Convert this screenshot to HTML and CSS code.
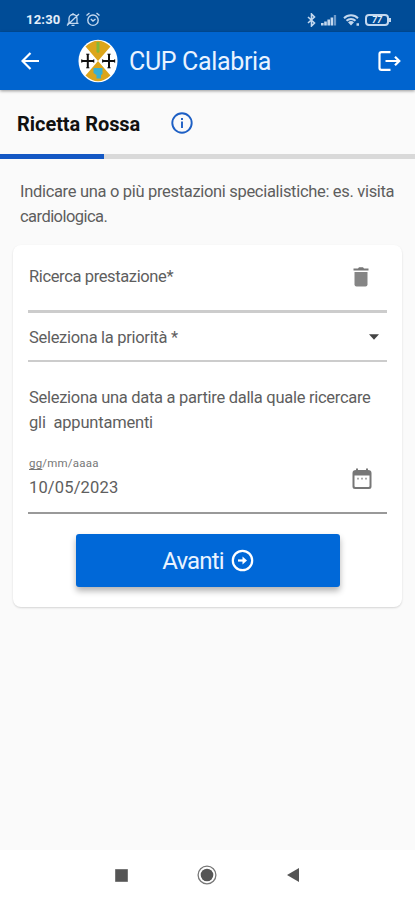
FILE: index.html
```html
<!DOCTYPE html>
<html lang="it">
<head>
<meta charset="utf-8">
<title>CUP Calabria</title>
<link rel="stylesheet" href="styles.css">
</head>
<body>
<div class="screen">
  <div class="status">
    <span class="clock">12:30</span>
    <svg class="ic-bell" width="14" height="15" viewBox="0 0 14 15" fill="none" stroke="#c3d8ef" stroke-width="1.3"><path d="M3 11V6.500a4 4 0 0 1 8 0V11M1.500 11.300h11M5.500 13.300h3M7 1v1.500M1 13.500L13 2"/></svg>
    <svg class="ic-alarm" width="14" height="15" viewBox="0 0 14 15" fill="none" stroke="#c3d8ef" stroke-width="1.400"><circle cx="7" cy="8.200" r="5.200"/><path d="M.5 3.500L3.500 1M13.500 3.500L10.500 1M4.800 7l2.200 2 2.500-2"/></svg>
    <span class="grow"></span>
    <svg class="ic-bt" width="9" height="14" viewBox="0 0 9 14" fill="none" stroke="#c3d8ef" stroke-width="1.600"><path d="M1 4l6.500 6L4.500 13V1l3 3L1 10"/></svg>
    <svg class="ic-sig" width="16" height="12" viewBox="0 0 16 12"><path fill="#c3d8ef" d="M0 9h2.600v2.500H0zM3.200 7.500h2.600v4H3.200zM6.400 5.500H9v6H6.400zM9.600 3.500h2.600v8H9.600z"/><path fill="#6e9ac9" d="M12.800 1h2.300v10.500h-2.300z"/></svg>
    <svg class="ic-wifi" width="17" height="14" viewBox="0 0 17 14" fill="none" stroke="#c3d8ef" stroke-width="2"><path d="M1 5.200a10 10 0 0 1 14 0M3.500 7.800a6.500 6.500 0 0 1 9 0"/><path fill="#c3d8ef" stroke="none" d="M8 12.500L5 9.300a4.500 4.500 0 0 1 6 0z"/><path d="M13.500 11.500h2.500" stroke-width="2.500"/></svg>
    <span class="battery"><span>77</span></span>
  </div>
  <header class="bar">
    <svg class="back" width="18" height="18" viewBox="0 0 18 18" fill="none" stroke="#fff" stroke-width="2.200"><path d="M18 9H2M9.500 1L1.500 9l8 8"/></svg>
    <svg class="logo" width="40" height="44" viewBox="0 0 40 44">
      <ellipse cx="20" cy="22" rx="19.500" ry="21.300" fill="#fff"/>
      <path fill="#dca51b" d="M20 22L7.500 7.500Q20-4 32.500 7.500zM20 22L7.500 36.500Q20 48 32.500 36.500z"/>
      <path fill="#83b83a" d="M18.500 3h3v10l-1.500 1-1.500-1z"/>
      <path fill="#39b0d2" d="M15.500 29h9v6l-1.500 1v3.500h-4.500V36l-3-2z"/>
      <path stroke="#111" stroke-width="2" fill="none" d="M3.500 22h12.500M9.800 15v14M24.500 22H37M31 15v14"/>
      <path stroke="#111" stroke-width="1" fill="none" d="M3.800 20.300v3.400M15.800 20.300v3.400M24.700 20.300v3.400M36.700 20.300v3.400M8.200 15.200h3.200M8.200 28.800h3.200M29.400 15.200h3.200M29.400 28.800h3.200"/>
    </svg>
    <h1>CUP Calabria</h1>
    <svg class="exit" width="23" height="20" viewBox="0 0 23 20" fill="none" stroke="#fff" stroke-width="2.200"><path d="M12.500 1.200H3.500Q1.500 1.200 1.500 3v14q0 1.800 2 1.800h9M7.500 10H21M17 5.700L21.300 10 17 14.300"/></svg>
  </header>
  <div class="tab">
    <h2>Ricetta Rossa</h2>
    <svg width="22" height="22" viewBox="0 0 22 22" fill="none" stroke="#1d5fc4" stroke-width="1.900"><circle cx="11" cy="11" r="9.700"/><path d="M11 9.500v6.500M11 6v2"/></svg>
  </div>
  <div class="progress"><div></div></div>
  <p class="intro"><span class="i1">Indicare una o più prestazioni specialistiche: es. visita</span><br><span class="i2">cardiologica.</span></p>
  <main class="card">
    <div class="field f1">
      <span class="t1">Ricerca prestazione*</span>
      <svg class="trash" width="16" height="20" viewBox="0 0 16 20"><path fill="#777" d="M5 1.500L6 .3h4l1 1.200h4.500v2H.5v-2z"/><path fill="#858585" d="M1.500 5h13v12.500q0 2-2 2h-9q-2 0-2-2z"/></svg>
    </div>
    <div class="field f2">
      <span class="t2">Seleziona la priorità *</span>
      <svg class="caret" width="10" height="6" viewBox="0 0 10 6"><path fill="#444" d="M0 .3h10L5 5.800z"/></svg>
    </div>
    <p class="when"><span class="t3">Seleziona una data a partire dalla quale ricercare</span><br><span class="t4">gli&nbsp; appuntamenti</span></p>
    <div class="field f3">
      <div class="date"><small><u>gg</u>/mm/aaaa</small><span>10/05/2023</span></div>
      <svg class="cal" width="20" height="22" viewBox="0 0 20 22"><path fill="#777" d="M4 .5h2V2h8V.5h2V2q3.500 0 3.500 3v13.500q0 2.500-2.500 2.500H3Q.5 21 .5 18.500V5Q.5 2 4 2z"/><path fill="#fff" d="M2.500 7.500h15v10.500q0 1-1 1h-13q-1 0-1-1z"/><path stroke="#aaa" stroke-width="1.800" d="M5 10.700h2M9 10.700h2M13 10.700h2"/></svg>
    </div>
    <button class="next"><span>Avanti</span>
      <svg width="23" height="23" viewBox="0 0 23 23" fill="none" stroke="#fff" stroke-width="2.200"><circle cx="11.500" cy="11.500" r="9.700"/><path d="M7 11.500h6"/><path fill="#fff" stroke="none" d="M11.500 7.500l4.500 4-4.500 4z"/></svg>
    </button>
  </main>
  <div class="grow"></div>
  <nav class="nav">
    <svg width="13" height="13" viewBox="0 0 13 13"><path fill="#555" stroke="#777" d="M.5.5h12v12H.5z"/></svg>
    <svg width="20" height="20" viewBox="0 0 20 20"><circle cx="10" cy="10" r="8.900" fill="none" stroke="#777" stroke-width="1.300"/><circle cx="10" cy="10" r="6.300" fill="#555"/></svg>
    <svg width="12" height="14" viewBox="0 0 12 14"><path fill="#555" d="M12 0v14L0 7z"/></svg>
  </nav>
</div>
</body>
</html>
```
FILE: styles.css
```css
* { box-sizing: border-box; }
body { margin: 0; font-family: Roboto, "Liberation Sans", sans-serif; color: #5e5e5e; background: #fafafa; }
h1, h2, p { margin: 0; font-weight: 400; }
svg { display: block; flex: none; }
span, h1, h2, small { white-space: nowrap; }
.screen { display: flex; flex-direction: column; width: 415px; height: 900px; overflow: hidden; }
.grow { flex: 1; }
.status { display: flex; align-items: center; height: 32px; padding: 7px 24px 0 26px; background: #004c97; }
.clock { width: 35px; margin-right: 5px; color: #e4eefa; font-size: 13px; font-weight: 700; letter-spacing: 0.2px; }
.ic-alarm { margin-left: 6px; }
.ic-sig { margin-left: 5px; }
.ic-wifi { margin-left: 6px; }
.battery { position: relative; display: flex; align-items: center; justify-content: center; width: 24px; height: 12px; margin: 0 2px 0 5px; border: 2px solid #c3d8ef; border-radius: 4px; color: #e4eefa; font-size: 9px; font-weight: 700; font-style: italic; line-height: 8px; }
.battery::after { content: ""; position: absolute; right: -4px; top: 2px; width: 2px; height: 4px; background: #c3d8ef; }
.bar { display: flex; align-items: center; height: 58px; padding: 0 14px 0 21px; background: #0064cf; box-shadow: 0 1px 3px rgba(0,0,0,.4); }
.logo { margin-left: 39px; }
.bar h1 { flex: 1; margin: 1px 0 0 11px; color: #e9f3ff; font-size: 25px; letter-spacing: -0.35px; }
.tab { display: flex; align-items: center; height: 64px; padding: 2px 0 0 17px; }
.tab h2 { width: 154px; padding-top: 2px; color: #111; font-size: 20px; font-weight: 700; letter-spacing: -0.05px; }
.progress { height: 5px; background: #d9d9d9; }
.progress div { width: 104px; height: 5px; background: #1458c4; }
.intro { height: 86px; padding: 20px 0 0 20px; font-size: 16.5px; line-height: 25px; }
.i1 { letter-spacing: -0.32px; }
.i2 { letter-spacing: -0.55px; }
.t1 { letter-spacing: -0.37px; }
.t2 { letter-spacing: -0.3px; }
.t3 { letter-spacing: -0.29px; }
.t4 { letter-spacing: -0.2px; }
.card { height: 362px; margin: 0 13px; padding: 0 15px; background: #fff; border-radius: 8px; box-shadow: 0 1px 2px rgba(0,0,0,.15); font-size: 16.5px; }
.field { display: flex; align-items: center; justify-content: space-between; }
.f1 { height: 68px; padding: 0 18px 2px 1px; border-bottom: 3px solid #ccc; }
.f2 { height: 49px; padding: 1px 8px 0 1px; border-bottom: 2px solid #ccc; }
.when { height: 82px; padding: 23px 0 0 1px; line-height: 25px; }
.f3 { height: 70px; padding: 2px 15px 0 1px; border-bottom: 2px solid #999; }
.date { display: flex; flex-direction: column; padding-bottom: 3px; }
.date small { font-size: 11.5px; line-height: 16px; letter-spacing: 0.2px; color: #777; }
.date u { text-decoration-skip-ink: none; text-underline-offset: 2px; }
.date span { font-size: 16.5px; line-height: 25px; margin-top: 4px; letter-spacing: 0.15px; }
.next { display: flex; align-items: center; justify-content: center; gap: 7px; width: 264px; height: 53px; margin: 20px 0 0 48px; padding: 0; border: 0; border-radius: 3px; background: #0068d8; box-shadow: 0 4px 6px rgba(0,0,0,.3); color: #e9f3ff; font: 24px Roboto, sans-serif; letter-spacing: -0.8px; }
.nav { display: flex; align-items: center; height: 50px; padding-left: 115px; background: #fff; }
.nav svg:nth-child(2) { margin-left: 69px; }
.nav svg:nth-child(3) { margin-left: 70px; }
```
